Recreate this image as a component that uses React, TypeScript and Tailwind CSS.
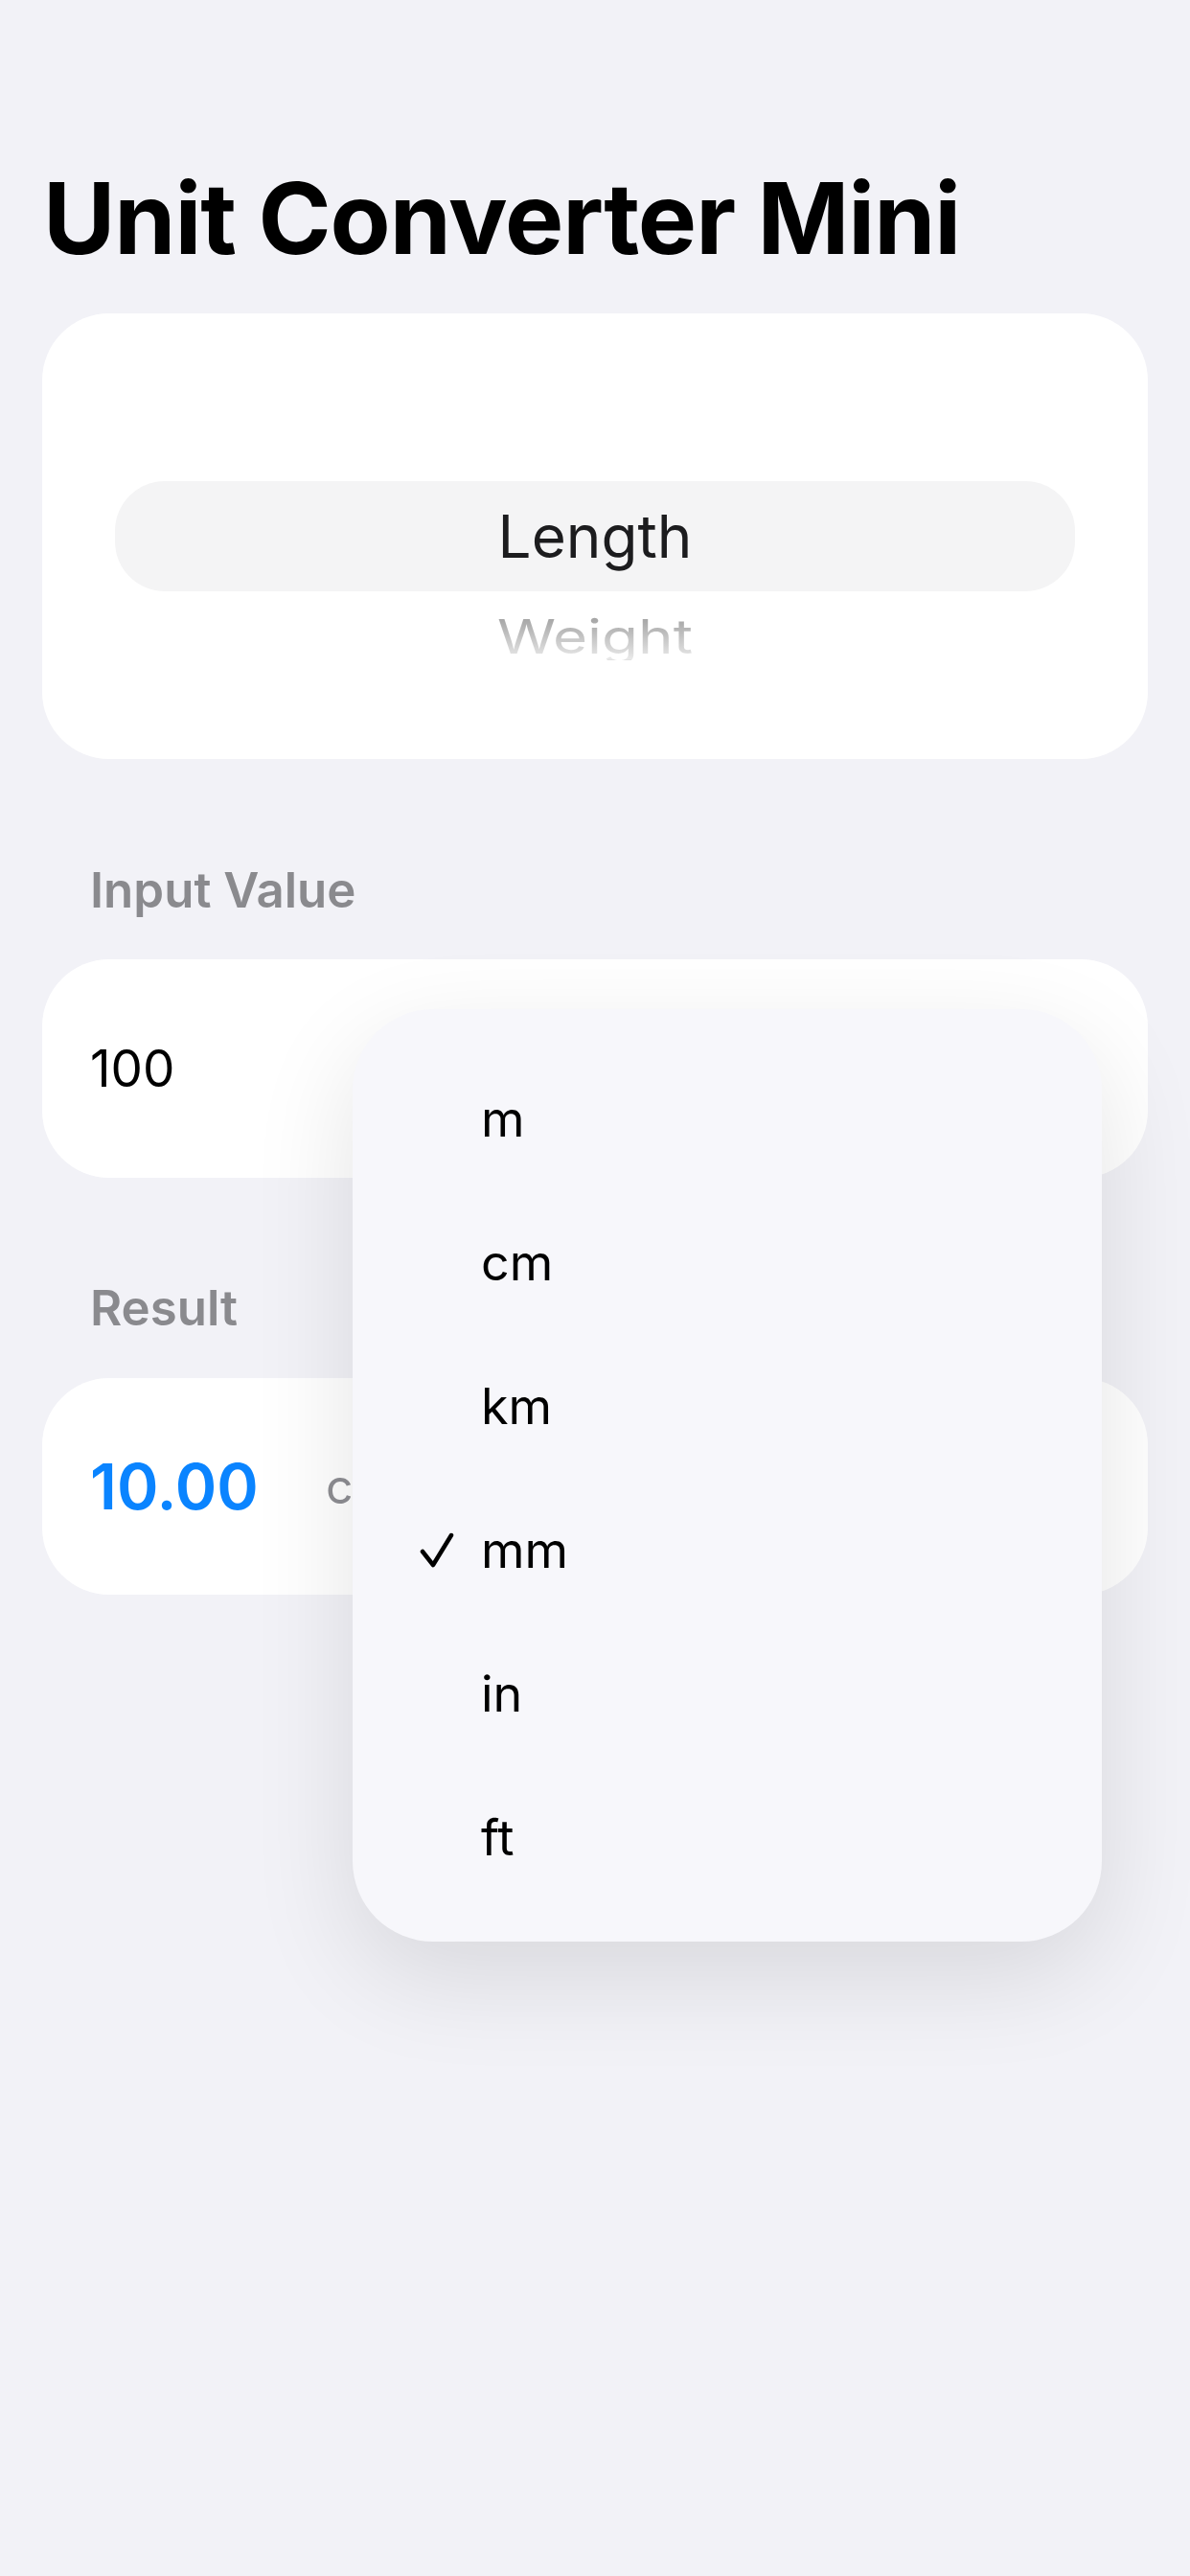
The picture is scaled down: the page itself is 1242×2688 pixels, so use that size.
const units = ["m", "cm", "km", "mm", "in", "ft"];

const CheckMark = () => (
  <svg width="36" height="38" viewBox="0 0 36 38" fill="none">
    <path
      d="M3 20 L14 34 L33 3"
      stroke="#000"
      strokeWidth="4.5"
      strokeLinecap="round"
      strokeLinejoin="round"
    />
  </svg>
);

const UnitMenu = ({ selected }: { selected: string }) => (
  <div className="absolute left-[368px] top-[1053px] w-[782px] rounded-[84px] bg-[#f7f7fb] pt-[40px] pb-[33px] shadow-[0_36px_110px_rgba(0,0,0,0.11)]">
    {units.map((u) => (
      <div key={u} className="flex h-[150px] items-center pl-[70px]">
        <div className="flex w-[64px] items-center">
          {u === selected && <CheckMark />}
        </div>
        <span className="text-[52px] leading-none text-black">{u}</span>
      </div>
    ))}
  </div>
);

export default function App() {
  return (
    <div className="relative min-h-screen w-full bg-[#f2f2f7] px-[44px] pt-[176px] font-['Inter',sans-serif]">
      <h1 className="pl-[1px] text-[103px] font-bold leading-none tracking-[-0.01em] text-black">
        Unit Converter Mini
      </h1>

      {/* category wheel */}
      <div className="mt-[48px] flex h-[465px] flex-col rounded-[70px] bg-white px-[76px] pt-[175px]">
        <div className="flex h-[115px] items-center justify-center rounded-[52px] bg-[#f4f4f5]">
          <span className="text-[62px] leading-none text-[#1c1c1e]">Length</span>
        </div>
        <div className="flex h-[94px] items-center justify-center">
          <span className="scale-y-[0.8] bg-linear-to-b from-[#9c9c9c] to-[#ebebeb] bg-clip-text text-[62px] leading-none text-transparent">
            Weight
          </span>
        </div>
      </div>

      <div className="mt-[111px] pl-[50px] text-[51px] font-semibold leading-none text-[#8a8a8e]">
        Input Value
      </div>
      <div className="mt-[47px] flex h-[228px] items-center rounded-[70px] bg-white px-[50px]">
        <span className="text-[53px] leading-none text-black">100</span>
      </div>

      <div className="mt-[110px] pl-[50px] text-[51px] font-semibold leading-none text-[#8a8a8e]">
        Result
      </div>
      <div className="mt-[48px] flex h-[226px] items-center gap-[70px] rounded-[70px] bg-white px-[50px]">
        <span className="text-[66px] font-semibold leading-none text-[#0a84ff]">10.00</span>
        <span className="text-[50px] leading-none text-[#8e8e93]">cm</span>
      </div>

      <UnitMenu selected="mm" />
    </div>
  );
}
